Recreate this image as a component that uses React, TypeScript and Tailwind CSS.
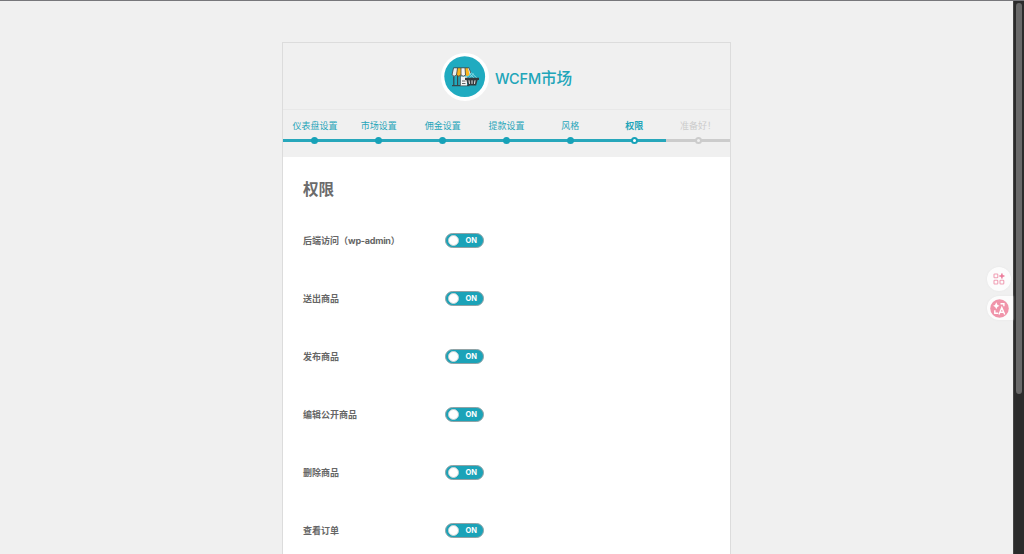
import React from "react";

type StepState = "done" | "active" | "pending";

const steps: { label: string; state: StepState }[] = [
  { label: "仪表盘设置", state: "done" },
  { label: "市场设置", state: "done" },
  { label: "佣金设置", state: "done" },
  { label: "提款设置", state: "done" },
  { label: "风格", state: "done" },
  { label: "权限", state: "active" },
  { label: "准备好！", state: "pending" },
];

const permissions = ["后端访问（wp-admin）", "送出商品", "发布商品", "编辑公开商品", "删除商品", "查看订单"];

const labelStyles: Record<StepState, string> = {
  done: "text-[#1fa5b9] font-normal",
  active: "text-[#1fa5b9] font-bold",
  pending: "text-[#cccccc] font-normal",
};

const lineStyles: Record<StepState, string> = {
  done: "bg-[#27a7bb]",
  active: "bg-[#27a7bb]",
  pending: "bg-[#cccccc]",
};

const dotStyles: Record<StepState, string> = {
  done: "border-[#17a2b8] bg-[#17a2b8]",
  active: "border-[#17a2b8] bg-white",
  pending: "border-[#cccccc] bg-[#f0f0f0]",
};

function StoreLogo() {
  return (
    <svg width="48" height="48" viewBox="0 0 48 48" className="shrink-0">
      <circle cx="24" cy="24" r="24" fill="#fff" />
      <circle cx="23.7" cy="23.6" r="20.4" fill="#20abc0" />
      <path d="M12.8 22v10.5M16.6 23v9.5M11 32.6h17.5" stroke="#37474b" strokeWidth="1.2" fill="none" />
      <path d="M19.5 23.5h6.5v9h-6.5z" fill="#f5f5f5" />
      <path d="M19.3 23v9.5M21 28h3.5M21 30.5h3.5" stroke="#555" strokeWidth=".9" />
      <path d="M12.6 15h3.9l-1 7c-.8 1.8-3.7 1.8-4.5 0z" fill="#e9eded" />
      <path d="M16.5 15h3.5v7c-.8 1.8-3.7 1.8-4.5 0z" fill="#fbb51b" />
      <path d="M20 15h4l.5 7c-.8 1.8-3.7 1.8-4.5 0z" fill="#f5f5f5" />
      <path d="M24 15h2.9l1.8 6.5c-.8 1.8-3.4 2-4.2.5z" fill="#fbb51b" />
      <path d="M26.8 15h1.4l1.7 5-1.2 1.3z" fill="#eeeeee" />
      <path d="M12.4 14.8h15.8M12.5 15l-1.5 7M16.5 15l-1 7M20 15v7M24 15l.5 7M28 15l1.8 5M11 22q2.2 2.4 4.5 0q2.2 2.4 4.5 0q2.2 2.4 4.5 0" stroke="#404145" strokeWidth=".8" fill="none" />
      <path d="M25.3 25.2l5.2-5.2 5.5 5.2M28.2 25l4.6-4.3M33 25l-4.5-4.2" stroke="#8bdae3" strokeWidth="1" fill="none" />
      <path d="M24 24.7h14v2.4h-1.4l-1.5 5.4h-8.2l-1.5-5.4H24z" fill="#343a3e" />
      <path d="M28 27.3l.5 3.6M31 27.3v3.6M34 27.3l-.5 3.6" stroke="#eee" strokeWidth="1" />
    </svg>
  );
}

function Step({ label, state }: { label: string; state: StepState }) {
  return (
    <li className="flex flex-1 flex-col items-center">
      <span className={`h-[18px] whitespace-nowrap text-[9px] leading-[18px] ${labelStyles[state]}`}>{label}</span>
      <div className="mt-px grid h-[9px] w-full place-items-center">
        <span className={`col-start-1 row-start-1 h-[3px] w-full ${lineStyles[state]}`} />
        <span className={`col-start-1 row-start-1 size-[7px] rounded-full border-2 ${dotStyles[state]}`} />
      </div>
    </li>
  );
}

function Toggle() {
  return (
    <button className="flex h-[15px] w-[39px] items-center justify-between rounded-full border-[1.5px] border-[#91a3a6] bg-[#1ba3b8] pl-[2px] pr-[6px]">
      <span className="size-[11px] rounded-full border border-[#c5d2d4] bg-white" />
      <span className="font-['Inter',sans-serif] text-[7.5px] leading-[13px] font-bold text-white">ON</span>
    </button>
  );
}

function FloatingTools() {
  return (
    <aside className="absolute top-[266px] right-[11px] flex w-[26px] flex-col gap-[5px]">
      <button className="grid size-6 place-items-center rounded-full bg-[#fcfcfc] shadow-[0_0_2px_#e4e4e4]">
        <svg width="12" height="12" viewBox="0 0 12 12" fill="none" stroke="#f0a0b5" strokeWidth="1.1">
          <rect x="1" y="1" width="3.8" height="3.8" rx=".8" />
          <rect x="1" y="7.2" width="3.8" height="3.8" rx=".8" />
          <rect x="7" y="7.2" width="3.8" height="3.8" rx=".8" />
          <path d="M8.9.4v5M6.4 2.9h5" stroke="#ec7898" strokeWidth="1.5" />
        </svg>
      </button>
      <button className="flex h-6 w-[26px] items-center rounded-l-full bg-[#fcfcfc] pl-[3px] shadow-[0_0_2px_#e4e4e4]">
        <svg width="19" height="19" viewBox="0 0 19 19" fill="none" stroke="#fff" strokeWidth="1.4">
          <circle cx="9.5" cy="9.5" r="9.3" fill="#f094aa" stroke="none" />
          <path d="M6.3 3.3Q6.9 6.2 9.5 6.8Q6.9 7.4 6.3 10.3Q5.7 7.4 3.1 6.8Q5.7 6.2 6.3 3.3Z" fill="#fff" stroke="none" />
          <path d="M10.5 4.7h3.4v2.6M4.8 11.3v2.9h3.4M9 15.5l2.8-6.9 2.9 6.9M10 13.3h3.8" />
        </svg>
      </button>
    </aside>
  );
}

export default function App() {
  return (
    <div className="relative flex h-[554px] w-full overflow-hidden border-t border-[#77777b] bg-[#f0f0f0] font-['Inter','Noto_Sans_CJK_SC',sans-serif]">
      <main className="flex min-w-0 flex-1 pl-[282px] pt-[41px]">
        <section className="h-[600px] w-[449px] shrink-0 border border-[#dcdcdc] bg-white">
          <header className="flex h-[67px] items-center justify-center gap-[6px] border-b border-[#e8e8e8] bg-[#f0f0f0] pt-[2px]">
            <StoreLogo />
            <h1 className="pt-[4px] text-[15.6px] leading-5 font-medium text-[#20a5b9]">
              <span className="text-[14.5px] tracking-[-0.2px]">WCFM</span>市场
            </h1>
          </header>
          <ol className="flex h-[47px] overflow-hidden bg-[#f0f0f0] pt-[7px]">
            {steps.map((step) => (
              <Step key={step.label} {...step} />
            ))}
          </ol>
          <div className="pl-5">
            <h2 className="pt-[21px] text-[15.6px] leading-6 font-bold text-[#6b6b6b]">权限</h2>
            <div className="pt-[9px]">
              {permissions.map((permission) => (
                <div key={permission} className="flex h-[58px] items-center">
                  <span className="w-[142px] whitespace-nowrap pt-px text-[9px] font-bold text-[#666666]">
                    {permission.split("wp-admin").map((part, index) => (
                      <React.Fragment key={index}>
                        {index > 0 && <span className="tracking-[-0.25px]">wp-admin</span>}
                        {part}
                      </React.Fragment>
                    ))}
                  </span>
                  <Toggle />
                </div>
              ))}
            </div>
          </div>
        </section>
      </main>
      <FloatingTools />
      <div className="flex w-[11px] justify-center border-l border-[#454545] bg-[#2b2b2b] pt-[2px]">
        <div className="h-[391px] w-[6px] rounded-full bg-[#696969]" />
      </div>
    </div>
  );
}
